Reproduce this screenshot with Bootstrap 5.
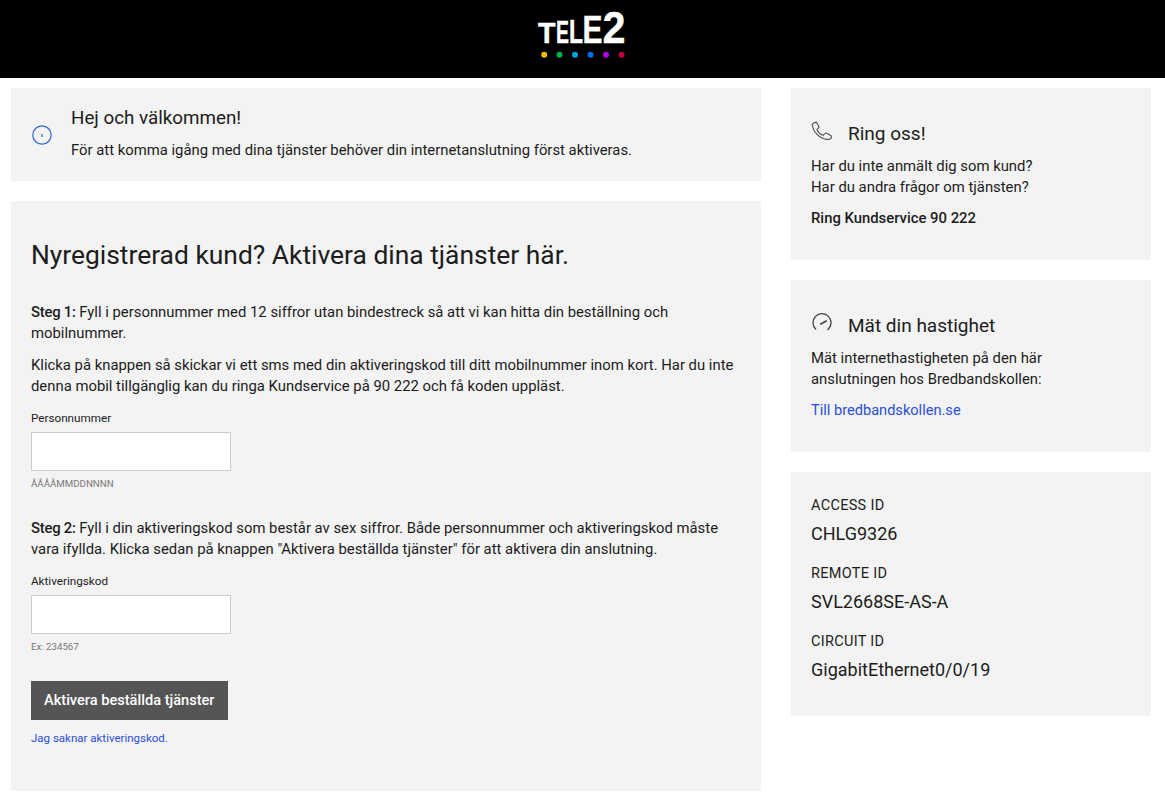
<!DOCTYPE html>
<html lang="sv">
<head>
    <meta charset="UTF-8">
    <meta name="viewport" content="width=device-width, initial-scale=1.0">
    <link href="https://cdn.jsdelivr.net/npm/bootstrap@5.3.0/dist/css/bootstrap.min.css" rel="stylesheet">
    <title>Tele2</title>
    <style>
        body { font-family: Roboto, "Liberation Sans", sans-serif; font-size: 14.85px; line-height: 21px; color: #1c1c1c; height: 803px; overflow: hidden; }
        .site-head { height: 78px; background: #000; }
        .logo-text { font-family: "Liberation Sans", sans-serif; font-weight: 700; fill: #fff; stroke: #fff; stroke-width: .4px; }
        .page-wrap { padding: 10px 14px 0 11px; gap: 30px; }
        .col-left { width: 750px; gap: 20px; }
        .col-right { width: 360px; gap: 20px; }
        .panel { background: #f3f3f3; }
        .panel-hello { height: 93px; padding: 0 20px 4px 21px; }
        .hello-icon { margin-right: 19px; margin-top: 4px; }
        .hello-title { font-size: 18.8px; line-height: 26px; font-weight: 400; margin: 0 0 9px; }
        .panel-form { height: 590px; padding: 37px 20px 0; }
        .form-title { font-size: 26.4px; line-height: 34px; font-weight: 400; margin: 0 0 30px; }
        .panel-form p { margin-bottom: 11px; }
        .step-b { font-weight: 500; }
        .panel-form .step-b { letter-spacing: -.25px; }
        .field-label { font-size: 11.7px; line-height: 16px; margin: 13px 0 6px; display: block; }
        .field-input { width: 200px; height: 39px; border: 1px solid #ccc; border-radius: 0; padding: 0 8px; }
        .field-hint { font-size: 9.7px; line-height: 12px; color: #777; margin: 7px 0 28px; }
        .btn-activate { background: #555; color: #fff; border: 0; border-radius: 0; height: 39px; padding: 0 13px; font-size: 14.6px; font-weight: 500; }
        .btn-activate:hover { background: #555; color: #fff; }
        .missing-link { display: block; font-size: 11.5px; line-height: 16px; margin-top: 10px; color: #2b50d8; text-decoration: none; }
        .side-h { height: 172px; padding: 31px 20px 0; }
        .side-title { font-size: 19px; line-height: 30px; font-weight: 400; margin: 0 0 7px; }
        .side-h p { margin-bottom: 10px; }
        .side-link { color: #2b50d8; text-decoration: none; font-size: 14.6px; }
        .side-icon { width: 22px; height: 22px; margin-right: 15px; flex: none; margin-top: -12px; }
        .panel-ids { height: 244px; padding: 23px 20px 0; }
        .id-name { font-size: 14.5px; line-height: 21px; letter-spacing: .3px; margin-bottom: 6px; }
        .id-value { font-size: 18px; line-height: 24px; margin-bottom: 17px; }
    </style>
</head>
<body>
    <header class="site-head d-flex justify-content-center">
        <svg width="100" height="78" viewBox="0 0 100 78" role="img" aria-label="Tele2">
            <text class="logo-text" x="5" y="42.500" font-size="29" textLength="17.500" lengthAdjust="spacingAndGlyphs">T</text>
            <text class="logo-text" x="23" y="42.500" font-size="31" textLength="13" lengthAdjust="spacingAndGlyphs">E</text>
            <text class="logo-text" x="36" y="42.500" font-size="33" textLength="14" lengthAdjust="spacingAndGlyphs">L</text>
            <text class="logo-text" x="49.500" y="42.500" font-size="39" textLength="20" lengthAdjust="spacingAndGlyphs">E</text>
            <text class="logo-text" x="69.500" y="42.500" font-size="45" textLength="23" lengthAdjust="spacingAndGlyphs">2</text>
            <circle cx="11.200" cy="54.700" r="3" fill="#f5b800"/>
            <circle cx="26.500" cy="54.700" r="3" fill="#00b04f"/>
            <circle cx="42" cy="54.700" r="3" fill="#00a3e0"/>
            <circle cx="57.500" cy="54.700" r="3" fill="#0a6cf0"/>
            <circle cx="73" cy="54.700" r="3" fill="#b400e0"/>
            <circle cx="88.500" cy="54.700" r="3" fill="#c4003c"/>
        </svg>
    </header>
    <main class="page-wrap d-flex align-items-start">
        <div class="col-left d-flex flex-column">
            <section class="panel panel-hello d-flex align-items-center">
                <svg class="hello-icon" width="20" height="20" viewBox="0 0 20 20" fill="none" stroke="#2b66d8" stroke-width="1.2"><circle cx="10" cy="10" r="9.200"/><path d="M10 9v3"/></svg>
                <div>
                    <h2 class="hello-title">Hej och välkommen!</h2>
                    <div>För att komma igång med dina tjänster behöver din internetanslutning först aktiveras.</div>
                </div>
            </section>
            <section class="panel panel-form">
                <h1 class="form-title">Nyregistrerad kund? Aktivera dina tjänster här.</h1>
                <p><span class="step-b">Steg 1:</span> Fyll i personnummer med 12 siffror utan bindestreck så att vi kan hitta din beställning och mobilnummer.</p>
                <p>Klicka på knappen så skickar vi ett sms med din aktiveringskod till ditt mobilnummer inom kort. Har du inte denna mobil tillgänglig kan du ringa Kundservice på 90 222 och få koden uppläst.</p>
                <label class="field-label" for="pnr">Personnummer</label>
                <input class="field-input d-block" id="pnr" type="text">
                <div class="field-hint">ÅÅÅÅMMDDNNNN</div>
                <p><span class="step-b">Steg 2:</span> Fyll i din aktiveringskod som består av sex siffror. Både personnummer och aktiveringskod måste vara ifyllda. Klicka sedan på knappen "Aktivera beställda tjänster" för att aktivera din anslutning.</p>
                <label class="field-label" for="kod">Aktiveringskod</label>
                <input class="field-input d-block" id="kod" type="text">
                <div class="field-hint">Ex: 234567</div>
                <button class="btn btn-activate" type="button">Aktivera beställda tjänster</button>
                <a class="missing-link" href="#">Jag saknar aktiveringskod.</a>
            </section>
        </div>
        <aside class="col-right d-flex flex-column">
            <section class="panel side-h">
                <div class="d-flex align-items-center">
                    <svg class="side-icon" viewBox="0 0 22 22" fill="none" stroke="#555" stroke-width="1.200" stroke-linejoin="round"><path d="M1.200 3.500C1.500 2.500 4 1 5.500 1.200c.7 1.200 2 3.500 2.500 5-.4.8-1.500 1.600-2 2.500 1.200 2.500 3.500 4.800 6 5.600.8-.7 1.800-1.800 3-2.300 1.800.6 4 1.900 5.300 3 .3 1.200 0 2.300-.8 2.800-1 .6-2.500.8-4 .5C8.500 17.500 2 11 1.200 3.500z"/></svg>
                    <h2 class="side-title">Ring oss!</h2>
                </div>
                <p>Har du inte anmält dig som kund?<br>Har du andra frågor om tjänsten?</p>
                <p class="step-b">Ring Kundservice 90 222</p>
            </section>
            <section class="panel side-h">
                <div class="d-flex align-items-center">
                    <svg class="side-icon" viewBox="0 0 22 22" fill="none" stroke="#444" stroke-width="1.300" stroke-linecap="round"><circle cx="11" cy="9.700" r="9" stroke-dasharray="13.500 1.200 13.500 1.200 13.500 14" transform="rotate(135 11 9.700)"/><path d="M9.700 11l5.600-3" stroke-width="1.600"/></svg>
                    <h2 class="side-title">Mät din hastighet</h2>
                </div>
                <p>Mät internethastigheten på den här<br>anslutningen hos Bredbandskollen:</p>
                <a class="side-link" href="#">Till bredbandskollen.se</a>
            </section>
            <section class="panel panel-ids">
                <div class="id-name">ACCESS ID</div>
                <div class="id-value">CHLG9326</div>
                <div class="id-name">REMOTE ID</div>
                <div class="id-value">SVL2668SE-AS-A</div>
                <div class="id-name">CIRCUIT ID</div>
                <div class="id-value">GigabitEthernet0/0/19</div>
            </section>
        </aside>
    </main>
    <script src="https://cdn.jsdelivr.net/npm/bootstrap@5.3.0/dist/js/bootstrap.bundle.min.js"></script>
</body>
</html>
